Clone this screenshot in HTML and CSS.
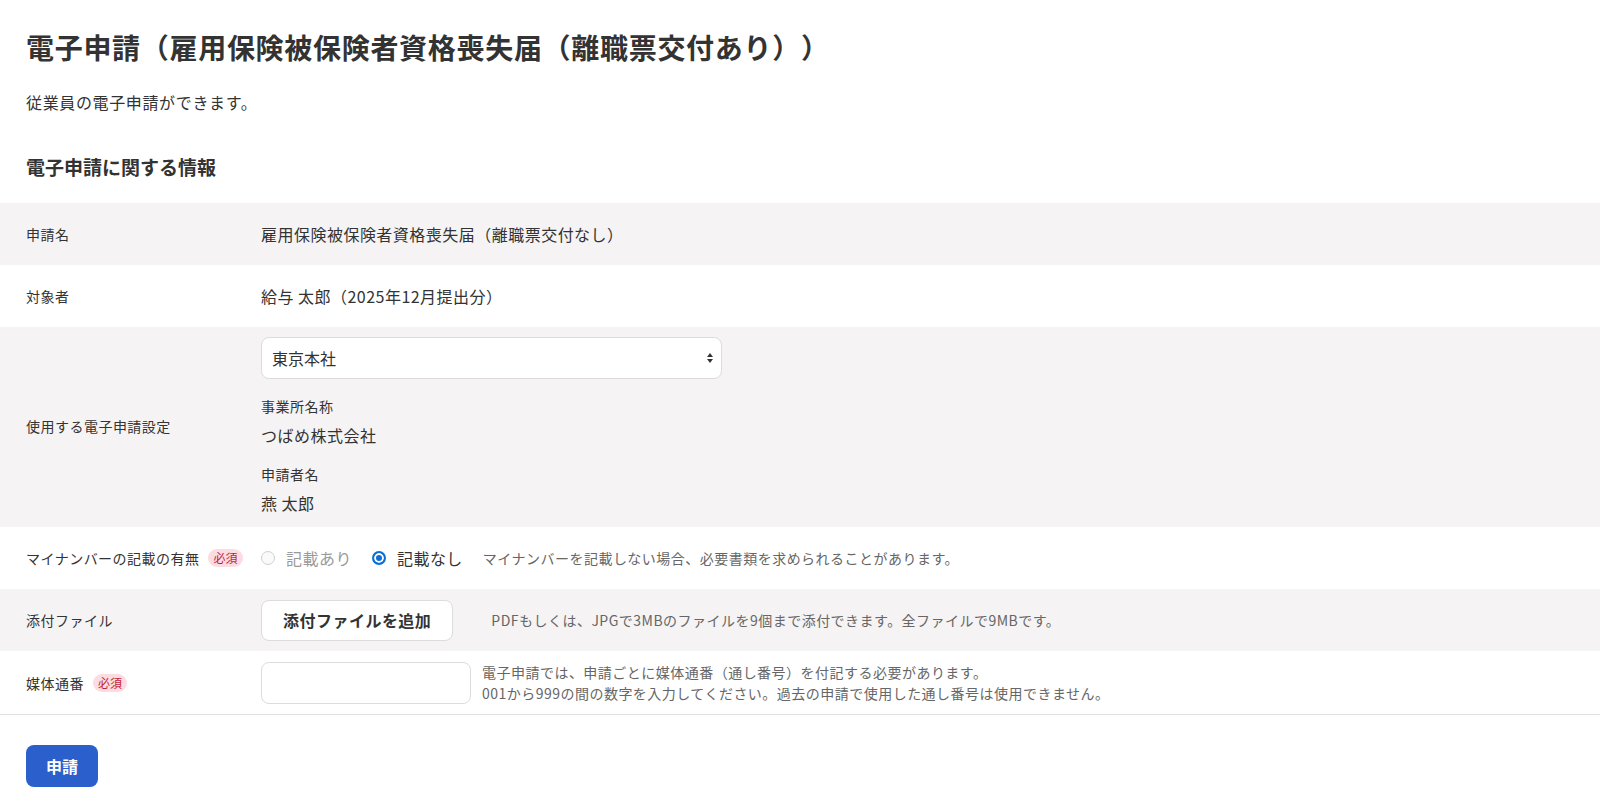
FILE: index.html
```html
<!DOCTYPE html>
<html lang="ja">
  <head>
    <meta charset="utf-8" />
    <meta name="viewport" content="width=device-width, initial-scale=1" />
    <title>電子申請</title>
    <link rel="stylesheet" href="styles.css">
  </head>
  <body>
    <main class="page">
      <h1 class="page-title">電子申請（雇用保険被保険者資格喪失届（離職票交付あり））</h1>
      <p class="page-lead">従業員の電子申請ができます。</p>
      <h2 class="section-title">電子申請に関する情報</h2>

      <div class="form-table">
        <div class="form-row shaded">
          <div class="form-label">申請名</div>
          <div class="form-value">雇用保険被保険者資格喪失届（離職票交付なし）</div>
        </div>
        <div class="form-row">
          <div class="form-label">対象者</div>
          <div class="form-value">給与 太郎（2025年12月提出分）</div>
        </div>
        <div class="form-row shaded settings-row">
          <div class="form-label">使用する電子申請設定</div>
          <div class="form-value">
            <div class="select-wrap">
              <select class="select">
                <option>東京本社</option>
              </select>
              <svg class="select-arrows" width="8" height="12" viewBox="0 0 8 12">
                <path d="M4 1 L7 5 L1 5 Z" fill="#333" />
                <path d="M4 11 L7 7 L1 7 Z" fill="#333" />
              </svg>
            </div>
            <dl class="info-list">
              <dt>事業所名称</dt>
              <dd>つばめ株式会社</dd>
              <dt>申請者名</dt>
              <dd>燕 太郎</dd>
            </dl>
          </div>
        </div>
        <div class="form-row">
          <div class="form-label">マイナンバーの記載の有無 <span class="badge">必須</span></div>
          <div class="form-value inline">
            <label class="radio disabled"><input type="radio" name="mynumber" disabled> 記載あり</label>
            <label class="radio"><input type="radio" name="mynumber" checked> 記載なし</label>
            <span class="note">マイナンバーを記載しない場合、必要書類を求められることがあります。</span>
          </div>
        </div>
        <div class="form-row shaded">
          <div class="form-label">添付ファイル</div>
          <div class="form-value inline">
            <button type="button" class="btn-outline">添付ファイルを追加</button>
            <span class="note attach-note">PDFもしくは、JPGで3MBのファイルを9個まで添付できます。全ファイルで9MBです。</span>
          </div>
        </div>
        <div class="form-row last">
          <div class="form-label">媒体通番 <span class="badge">必須</span></div>
          <div class="form-value inline">
            <input type="text" class="text-input">
            <p class="note serial-note">電子申請では、申請ごとに媒体通番（通し番号）を付記する必要があります。<br>001から999の間の数字を入力してください。過去の申請で使用した通し番号は使用できません。</p>
          </div>
        </div>
      </div>

      <div class="form-actions">
        <button type="button" class="btn-primary">申請</button>
      </div>
    </main>
  </body>
</html>
```

FILE: styles.css
```css
body {
  margin: 0;
  font-family: "Noto Sans CJK JP", "Noto Sans", sans-serif;
  color: #333;
  background: #fff;
  text-spacing-trim: space-all;
  letter-spacing: 0.03em;
}
.page {
  padding-bottom: 24px;
}
.page-title {
  font-size: 28px;
  line-height: 42px;
  font-weight: 700;
  letter-spacing: 0.025em;
  margin: 26px 26px 0;
}
.page-lead {
  font-size: 16px;
  line-height: 24px;
  letter-spacing: 0.04em;
  margin: 22px 26px 0;
}
.section-title {
  font-size: 19px;
  line-height: 28px;
  font-weight: 700;
  letter-spacing: 0;
  margin: 39px 26px 22px;
}

/* form table */
.form-row {
  display: flex;
  align-items: center;
  min-height: 62px;
  padding: 10px 26px;
  box-sizing: border-box;
}
.form-row.shaded {
  background-color: #f5f3f4;
}
.form-row.last {
  border-bottom: 1px solid #e2e2e2;
  min-height: 64px;
}
.settings-row {
  padding-bottom: 12px;
}
.form-label {
  width: 235px;
  flex-shrink: 0;
  display: flex;
  align-items: center;
  gap: 9px;
  font-size: 14px;
  line-height: 20px;
}
.form-value {
  flex-grow: 1;
  font-size: 16px;
  line-height: 24px;
}
.form-value.inline {
  display: flex;
  align-items: center;
}
.badge {
  display: inline-block;
  font-size: 12px;
  line-height: 18px;
  letter-spacing: 0;
  padding: 0 5px;
  border-radius: 9px;
  background-color: #fcdce2;
  color: #c21f3a;
}

/* select */
.select-wrap {
  position: relative;
  width: 461px;
}
.select {
  appearance: none;
  width: 100%;
  height: 42px;
  padding: 0 30px 0 10px;
  border: 1px solid #dcdcdc;
  border-radius: 8px;
  background: #fff;
  font-family: inherit;
  font-size: 16px;
  color: #333;
}
.select-arrows {
  position: absolute;
  right: 8px;
  top: 15px;
  pointer-events: none;
}
.info-list {
  margin: 17px 0 0;
}
.info-list dt {
  font-size: 14px;
  line-height: 20px;
}
.info-list dd {
  margin: 7px 0 17px;
  font-size: 16px;
  line-height: 24px;
}
.info-list dd:last-child {
  margin-bottom: 0;
}

/* radios */
.radio {
  display: flex;
  align-items: center;
  gap: 11px;
  margin-right: 20px;
}
.radio.disabled {
  color: #9a9a9a;
}
.radio input {
  appearance: none;
  margin: 0;
  width: 14px;
  height: 14px;
  border-radius: 50%;
  border: 1px solid #d0d0d0;
  background: #fafafa;
}
.radio input:checked {
  border: 2px solid #0b6fd5;
  background: #0b6fd5;
  box-shadow: inset 0 0 0 2px #fff;
}
.note {
  font-size: 14px;
  line-height: 21px;
  color: #666;
}
.attach-note {
  margin-left: 38px;
}
.serial-note {
  margin: 0 0 0 11px;
}

/* buttons and inputs */
.btn-outline {
  height: 41px;
  padding: 0 21px;
  border: 1px solid #dcdcdc;
  border-radius: 8px;
  background: #fff;
  font-family: inherit;
  font-size: 16px;
  font-weight: 700;
  letter-spacing: 0.03em;
  color: #333;
}
.text-input {
  width: 210px;
  height: 42px;
  box-sizing: border-box;
  border: 1px solid #dcdcdc;
  border-radius: 8px;
  font-family: inherit;
  font-size: 16px;
  padding: 0 10px;
}
.form-actions {
  padding: 30px 26px 0;
}
.btn-primary {
  width: 72px;
  height: 42px;
  border: none;
  border-radius: 8px;
  background-color: #2b5fcb;
  color: #fff;
  font-family: inherit;
  font-size: 16px;
  font-weight: 700;
}
```
